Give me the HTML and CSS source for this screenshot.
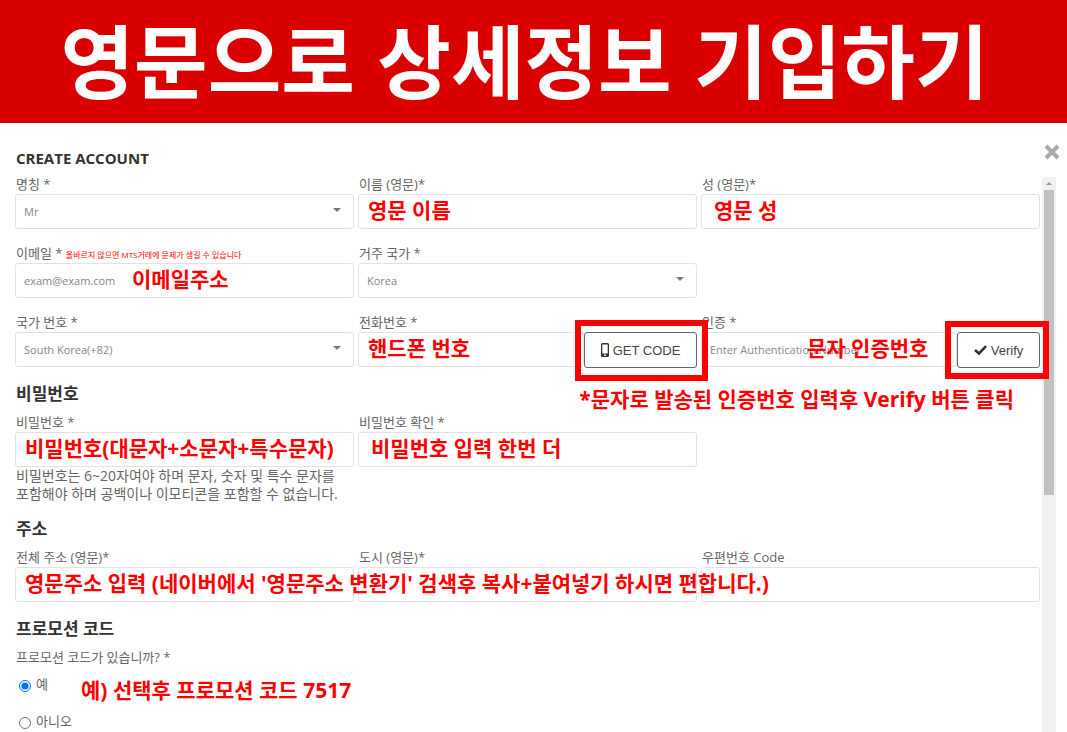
FILE: index.html
```html
<!DOCTYPE html>
<html lang="ko">
<head>
    <meta charset="UTF-8">
    <meta name="viewport" content="width=device-width, initial-scale=1.0">
    <title>Create Account</title>
    <link rel="stylesheet" href="styles.css">
</head>
<body>
    <header class="banner">
        <h1>영문으로 상세정보 기입하기</h1>
    </header>

    <main class="modal">
        <div class="modal-header">
            <h2>CREATE ACCOUNT</h2>
            <button class="close" type="button" aria-label="Close">
                <svg width="16" height="16" viewBox="0 0 16 16"><path d="M2 2L14 14M14 2L2 14" stroke="#aaa" stroke-width="4"/></svg>
            </button>
        </div>

        <div class="modal-body">
            <div class="scrollbar">
                <span class="scroll-arrow"></span>
                <div class="thumb"></div>
            </div>

            <form class="account-form">
                <div class="row">
                    <div class="field">
                        <label for="title">명칭 *</label>
                        <div class="control select">
                            <select id="title"><option>Mr</option></select>
                        </div>
                    </div>
                    <div class="field">
                        <label for="first-name">이름 (영문)*</label>
                        <div class="control">
                            <input type="text" id="first-name">
                            <span class="note">영문 이름</span>
                        </div>
                    </div>
                    <div class="field">
                        <label for="last-name">성 (영문)*</label>
                        <div class="control">
                            <input type="text" id="last-name">
                            <span class="note note-indent">영문 성</span>
                        </div>
                    </div>
                </div>

                <div class="row">
                    <div class="field">
                        <label for="email">이메일 * <small>올바르지 않으면 MTS거래에 문제가 생길 수 있습니다</small></label>
                        <div class="control">
                            <input type="text" id="email" placeholder="exam@exam.com">
                            <span class="note note-email">이메일주소</span>
                        </div>
                    </div>
                    <div class="field">
                        <label for="country">거주 국가 *</label>
                        <div class="control select">
                            <select id="country"><option>Korea</option></select>
                        </div>
                    </div>
                </div>

                <div class="row">
                    <div class="field">
                        <label for="country-code">국가 번호 *</label>
                        <div class="control select">
                            <select id="country-code"><option>South Korea(+82)</option></select>
                        </div>
                    </div>
                    <div class="field">
                        <label for="phone">전화번호 *</label>
                        <div class="control group">
                            <input type="text" id="phone">
                            <button class="btn btn-code" type="button">
                                <svg width="8" height="14" viewBox="0 0 8 14"><path fill="#333" fill-rule="evenodd" d="M1.500 0h5A1.500 1.500 0 0 1 8 1.500v11A1.500 1.500 0 0 1 6.500 14h-5A1.500 1.500 0 0 1 0 12.500v-11A1.500 1.500 0 0 1 1.500 0zM1.300 1.500v9h5.400v-9zM4 11.300a.9.9 0 1 0 0 1.800a.9.9 0 1 0 0-1.800z"/></svg>
                                <span>GET CODE</span>
                            </button>
                            <span class="note">핸드폰 번호</span>
                        </div>
                    </div>
                    <div class="field">
                        <label for="auth-code">인증 *</label>
                        <div class="control group">
                            <input type="text" id="auth-code" placeholder="Enter Authentication Number">
                            <button class="btn btn-verify" type="button">
                                <svg width="13" height="10" viewBox="0 0 13 10"><path d="M1 5L5 8.500L12 1.200" fill="none" stroke="#333" stroke-width="2.600"/></svg>
                                <span>Verify</span>
                            </button>
                            <span class="note note-auth">문자 인증번호</span>
                            <span class="note note-verify">*문자로 발송된 인증번호 입력후 Verify 버튼 클릭</span>
                        </div>
                    </div>
                </div>

                <h3>비밀번호</h3>
                <div class="row">
                    <div class="field">
                        <label for="password">비밀번호 *</label>
                        <div class="control">
                            <input type="password" id="password">
                            <span class="note">비밀번호(대문자+소문자+특수문자)</span>
                        </div>
                        <p class="hint">비밀번호는 6~20자여야 하며 문자, 숫자 및 특수 문자를<br>포함해야 하며 공백이나 이모티콘을 포함할 수 없습니다.</p>
                    </div>
                    <div class="field">
                        <label for="password-confirm">비밀번호 확인 *</label>
                        <div class="control">
                            <input type="password" id="password-confirm">
                            <span class="note note-indent">비밀번호 입력 한번 더</span>
                        </div>
                    </div>
                </div>

                <h3>주소</h3>
                <div class="row">
                    <div class="field">
                        <label for="address">전체 주소 (영문)*</label>
                        <div class="control">
                            <input type="text" id="address">
                            <span class="note">영문주소 입력 (네이버에서 '영문주소 변환기' 검색후 복사+붙여넣기 하시면 편합니다.)</span>
                        </div>
                    </div>
                    <div class="field">
                        <label for="city">도시 (영문)*</label>
                        <div class="control"><input type="text" id="city"></div>
                    </div>
                    <div class="field">
                        <label for="zip">우편번호 Code</label>
                        <div class="control"><input type="text" id="zip"></div>
                    </div>
                </div>

                <h3>프로모션 코드</h3>
                <fieldset class="promo">
                    <legend>프로모션 코드가 있습니까? *</legend>
                    <div class="radio">
                        <input type="radio" name="promo" id="promo-yes" checked>
                        <label for="promo-yes">예</label>
                        <span class="note note-promo">예) 선택후 프로모션 코드 7517</span>
                    </div>
                    <div class="radio">
                        <input type="radio" name="promo" id="promo-no">
                        <label for="promo-no">아니오</label>
                    </div>
                </fieldset>
            </form>
        </div>
    </main>
</body>
</html>
```
FILE: styles.css
```css
* {
    margin: 0;
    padding: 0;
    box-sizing: border-box;
}

body {
    height: 100vh;
    display: flex;
    flex-direction: column;
    overflow: hidden;
    background-color: #fff;
    color: #666;
    font-family: "Open Sans", "Noto Sans CJK KR", sans-serif;
    font-size: 13px;
}

.banner {
    flex: none;
    padding: 7px 34px 16px 16px;
    background-color: #da0000;
    color: #fff;
    text-align: center;
}

.banner h1 {
    font-family: "Noto Sans CJK KR", sans-serif;
    font-size: 80px;
    line-height: 100px;
    font-weight: bold;
    white-space: nowrap;
}

.modal {
    flex: 1;
    min-height: 0;
    display: flex;
    flex-direction: column;
}

.modal-header {
    display: flex;
    justify-content: space-between;
    align-items: center;
    padding: 18px 7px 0 16px;
    height: 52px;
}

.modal-header h2 {
    color: #333;
    font-size: 15px;
    line-height: 24px;
    font-weight: bold;
}

.close {
    display: flex;
    border: none;
    background: none;
    cursor: pointer;
    margin-bottom: 12px;
}

.modal-body {
    position: relative;
    flex: 1;
    min-height: 0;
}

.scrollbar {
    position: absolute;
    top: 2px;
    right: 11px;
    bottom: 0;
    width: 14px;
    padding: 0 2px;
    background-color: #f1f1f1;
}

.scroll-arrow {
    display: block;
    height: 13px;
}

.scroll-arrow::before {
    content: "";
    position: absolute;
    top: 5px;
    left: 4px;
    border: 3px solid transparent;
    border-top: none;
    border-bottom-color: #999;
}

.thumb {
    height: 55%;
    background-color: #c1c1c1;
}

.account-form {
    position: relative;
    height: 100%;
    padding: 0 27px 0 15px;
    overflow-y: auto;
    scrollbar-width: none;
}

.row {
    display: grid;
    grid-template-columns: repeat(3, 1fr);
    gap: 4px;
    margin-bottom: 15px;
}

.field > label,
.promo legend {
    display: block;
    height: 19px;
    padding-left: 1px;
    line-height: 19px;
    white-space: nowrap;
}

.field small {
    color: #f00;
    font-size: 8px;
}

.control {
    position: relative;
    height: 35px;
}

.control input,
.control select {
    width: 100%;
    height: 35px;
    padding: 0 8px;
    border: 1px solid #e2e2e2;
    border-radius: 3px;
    background-color: #fff;
    color: #888;
    font-family: inherit;
    font-size: 11px;
    appearance: none;
}

.control input::placeholder {
    color: #888;
}

.select::after {
    content: "";
    position: absolute;
    top: 14px;
    right: 13px;
    border: 4px solid transparent;
    border-top-color: #777;
    border-bottom: none;
}

.group {
    display: flex;
}

.group input {
    flex: 1;
    min-width: 0;
}

.btn {
    position: relative;
    display: flex;
    align-items: center;
    justify-content: center;
    gap: 4px;
    height: 36px;
    border: 1px solid #666;
    border-radius: 3px;
    background-color: #fff;
    color: #444;
    font-family: "Liberation Sans", sans-serif;
    font-size: 13px;
    cursor: pointer;
}

/* red frame around the buttons to click */
.btn::after {
    content: "";
    position: absolute;
    border: 6px solid #f00;
    z-index: 2;
}

.btn-code {
    width: 113px;
}

.btn-code::after {
    inset: -13px -12px -14px -10px;
}

.btn-verify {
    width: 83px;
}

.btn-verify::after {
    inset: -12px -10px -12px -13px;
}

/* red guide texts over the form */
.note {
    position: absolute;
    top: 1px;
    left: 10px;
    z-index: 3;
    color: #f00;
    font-size: 21px;
    line-height: 30px;
    font-weight: bold;
    white-space: nowrap;
    pointer-events: none;
}

.note-indent {
    left: 13px;
}

.note-email {
    left: 117px;
}

.note-auth {
    left: 106px;
}

.note-verify {
    top: 52px;
    left: auto;
    right: 26px;
}

.note-promo {
    top: 8px;
    left: 66px;
}

h3 {
    margin-bottom: 7px;
    padding-left: 1px;
    color: #333;
    font-size: 17px;
    line-height: 24px;
    font-weight: 600;
}

.hint {
    padding-left: 1px;
    font-size: 14px;
    line-height: 18px;
    margin-bottom: -1px;
    white-space: nowrap;
}

.promo {
    border: none;
}

.radio {
    position: relative;
    display: flex;
    align-items: center;
    gap: 5px;
    height: 37px;
    padding-left: 4px;
}

.radio input {
    width: 12px;
    height: 12px;
}

.radio label {
    margin-bottom: 4px;
}
```
